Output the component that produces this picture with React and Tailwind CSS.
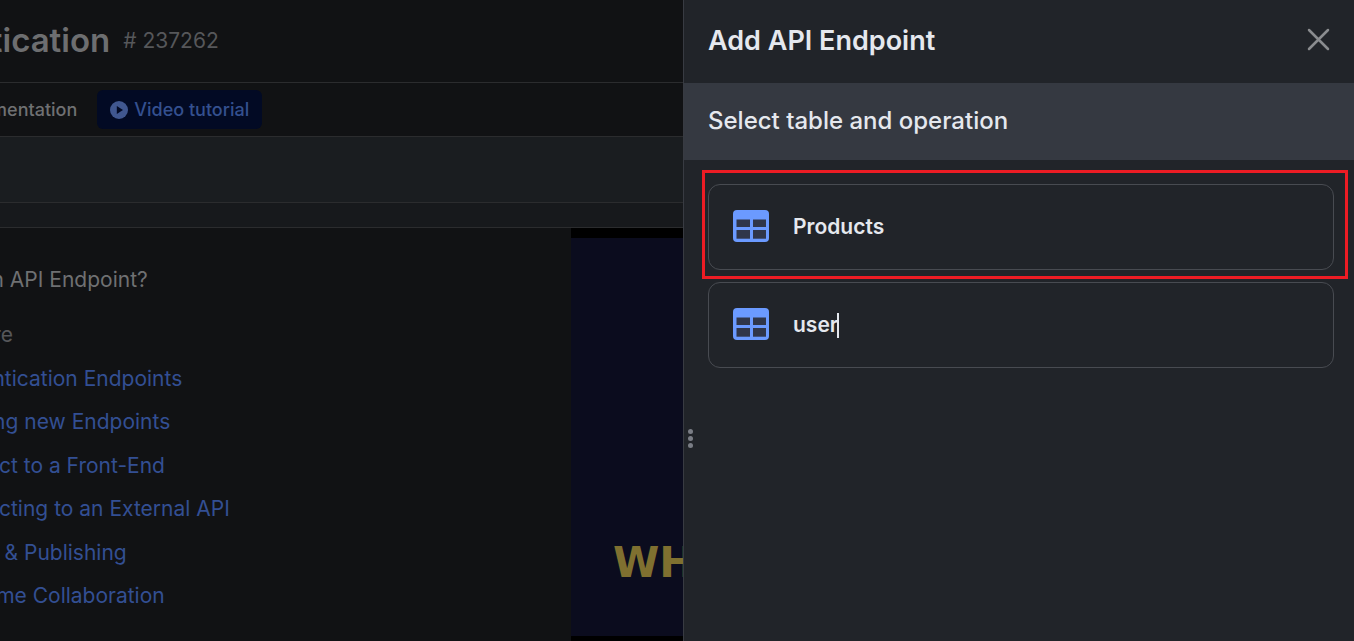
import React from 'react';

const links = [
  'Authentication Endpoints',
  'Creating new Endpoints',
  'Connect to a Front-End',
  'Connecting to an External API',
  'Export & Publishing',
  'Real-time Collaboration',
];

const tables = ['Products', 'user'];

const TableIcon = () => (
  <svg width="36" height="32" viewBox="0 0 36 32" className="shrink-0 -mt-[3px]">
    <rect x="0" y="0" width="36" height="32" rx="4" fill="#6b9aff" />
    <rect x="3.5" y="9.5" width="13.5" height="7.5" fill="#30364a" />
    <rect x="20" y="9.5" width="13" height="7.5" fill="#30364a" />
    <rect x="3.5" y="20" width="13.5" height="8.7" fill="#30364a" />
    <rect x="20" y="20" width="13" height="8.7" fill="#30364a" />
  </svg>
);

const PageBehind = () => (
  <div className="w-[683px] h-full shrink-0 overflow-hidden bg-[#111214] flex flex-col">
    <div className="h-[83px] shrink-0 border-b border-[#2b2c2e] flex items-center gap-[13px] -ml-[125px]">
      <h1 className="text-[33px] font-semibold text-[#6d6e70] whitespace-nowrap">Authentication</h1>
      <span className="text-[21px] text-[#56575a] whitespace-nowrap">
        # 237262
      </span>
    </div>
    <div className="h-[54px] shrink-0 border-b border-[#2b2c2e] flex items-center gap-5 -ml-[54px]">
      <span className="text-lg font-medium text-[#6f7072] whitespace-nowrap">Documentation</span>
      <div className="h-[39px] px-[13px] rounded-md bg-[#020a24] flex items-center gap-1.5 text-lg font-medium text-[#34508f] whitespace-nowrap">
        <svg width="18" height="18" viewBox="0 0 18 18">
          <circle cx="9" cy="9" r="9" fill="#40578f" />
          <path d="M6.8 4.9 L13 9 L6.8 13.1 Z" fill="#020a24" />
        </svg>
        Video tutorial
      </div>
    </div>
    <div className="h-[66px] shrink-0 border-b border-[#2b2c2e] bg-[#1a1d20]" />
    <div className="h-[25px] shrink-0 border-b border-[#2b2c2e] bg-[#17191c]" />
    <div className="flex-1 flex min-h-0">
      <div className="w-[571px] shrink-0 pt-[38px]">
        <h2 className="-ml-[100px] text-[21px] leading-[28px] text-[#6f7072] whitespace-nowrap">What is an API Endpoint?</h2>
        <ul className="mt-[27px] -ml-[66px] flex flex-col gap-[15.5px] text-[21px] leading-[28px] whitespace-nowrap">
          <li className="text-[#56575a]">Capture</li>
          {links.map((l, i) => (
            <li key={l} className={i === 5 ? 'text-[#334f93] -ml-[2px]' : 'text-[#334f93]'}>{l}</li>
          ))}
        </ul>
      </div>
      <div className="flex-1 bg-black py-[10px] pb-[5px] overflow-hidden">
        <div className="h-full bg-[#0b0c1e] pl-[42px] pt-[300px] overflow-hidden">
          <span className="text-[42px] leading-[50px] font-bold text-[#7f7030] whitespace-nowrap font-['DejaVu_Sans',sans-serif]">WHAT</span>
        </div>
      </div>
    </div>
  </div>
);

export default function App() {
  return (
    <div className="relative w-[1354px] h-[641px] overflow-hidden flex font-['Inter',sans-serif]">
      <PageBehind />
      <aside className="relative flex-1 h-full bg-[#212429] border-l border-[#383b42] flex flex-col">
        <div className="h-[83px] shrink-0 pl-6 pr-6 pb-[1px] flex items-center justify-between">
          <h2 className="text-[27px] font-semibold text-[#e5e8ee]">Add API Endpoint</h2>
          <svg width="24" height="24" viewBox="0 0 24 24" fill="none" stroke="#8a8c8f" strokeWidth="2.5" strokeLinecap="round" className="-mt-[4px]">
            <path d="M3 3 L22 22 M22 3 L3 22" />
          </svg>
        </div>
        <div className="h-[77px] shrink-0 bg-[#353941] pl-6 pb-[2px] flex items-center">
          <h3 className="text-2xl font-medium text-[#e5e8ee]">Select table and operation</h3>
        </div>
        <div className="pt-6 pl-6 pr-5 flex flex-col gap-3">
          {tables.map((name, i) => (
            <div key={name} className="h-[86px] rounded-xl border border-[#484b51] pl-6 flex items-center gap-6">
              <TableIcon />
              <span className="text-[21px] font-semibold text-[#e5e8ee]">{name}</span>
              {i === 1 && <span className="-ml-[25px] w-0.5 h-[25px] bg-[#e5e8ee]" />}
            </div>
          ))}
        </div>
        {/* drag handle */}
        <div className="absolute left-[4px] top-[429px] flex flex-col gap-[2px]">
          <span className="w-[5px] h-[5px] rounded-full bg-[#7a7d85]" />
          <span className="w-[5px] h-[5px] rounded-full bg-[#7a7d85]" />
          <span className="w-[5px] h-[5px] rounded-full bg-[#7a7d85]" />
        </div>
      </aside>
      {/* red highlight drawn on top of the screenshot */}
      <div className="absolute left-[702px] top-[170px] w-[646px] h-[109px] border-[3px] border-[#ed1c24]" />
    </div>
  );
}
